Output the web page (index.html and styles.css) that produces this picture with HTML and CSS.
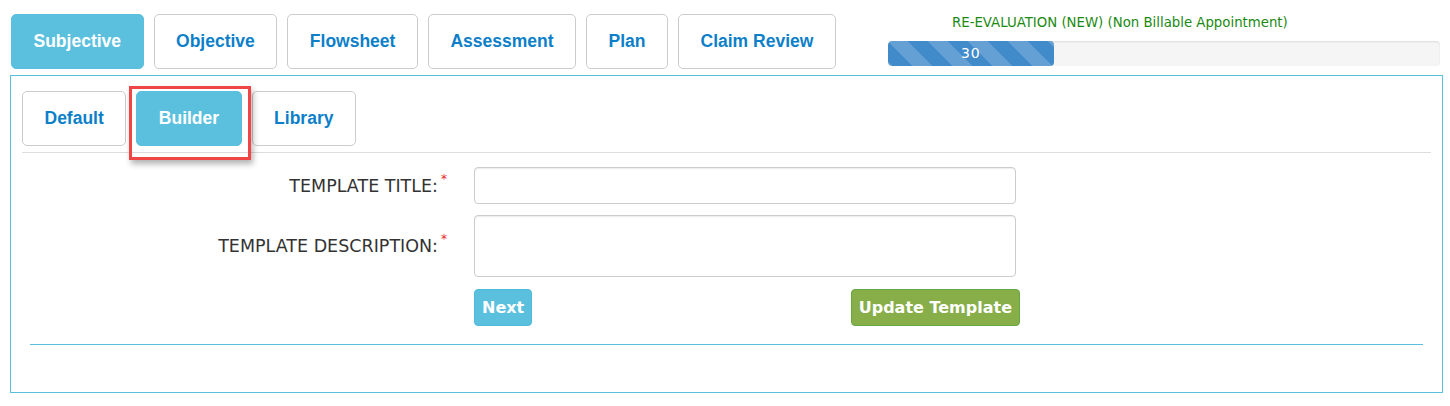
FILE: index.html
```html
<!DOCTYPE html>
<html lang="en">
<head>
<meta charset="utf-8">
<title>Template Builder</title>
<link rel="stylesheet" href="styles.css">
</head>
<body>
<div class="page">
  <header class="header">
    <nav class="tabs">
      <button class="tab active">Subjective</button>
      <button class="tab">Objective</button>
      <button class="tab">Flowsheet</button>
      <button class="tab">Assessment</button>
      <button class="tab">Plan</button>
      <button class="tab">Claim Review</button>
    </nav>
    <div class="status">
      <div class="status-label">RE-EVALUATION (NEW) (Non Billable Appointment)</div>
      <div class="progress"><div class="progress-bar" style="width:30%">30</div></div>
    </div>
  </header>
  <section class="panel">
    <nav class="tabs subtabs">
      <button class="tab">Default</button>
      <span class="mark-wrap"><button class="tab active">Builder</button><span class="mark"></span></span>
      <button class="tab">Library</button>
    </nav>
    <div class="divider"></div>
    <form class="form">
      <label class="label">TEMPLATE TITLE:<sup class="req">*</sup></label>
      <input class="field" type="text">
      <label class="label">TEMPLATE DESCRIPTION:<sup class="req">*</sup></label>
      <textarea class="field area"></textarea>
      <div class="spacer"></div>
      <div class="actions">
        <button type="button" class="btn btn-next">Next</button>
        <button type="button" class="btn btn-update">Update Template</button>
      </div>
    </form>
    <div class="rule"></div>
  </section>
</div>
</body>
</html>
```

FILE: styles.css
```css
* { box-sizing: border-box; }
html, body { margin: 0; padding: 0; background: #fff; }
body { font-family: "DejaVu Sans", sans-serif; }

.page { padding: 14px 7px 0 10px; }

.header { display: flex; align-items: flex-start; height: 55px; }

.tabs { display: flex; gap: 10px; margin-left: 1px; }

.tab {
  height: 55px;
  padding: 0 21.5px;
  border: 1px solid #ccc;
  border-radius: 5px;
  background: #fff;
  color: #0d7fc9;
  font-family: "Liberation Sans", Arial, sans-serif;
  font-weight: bold;
  font-size: 17.5px;
  cursor: pointer;
}
.tab.active { background: #5bc0de; border-color: #5bc0de; color: #fff; }

.status { margin-left: auto; margin-right: 3px; width: 552px; }
.status-label {
  padding-left: 64px;
  font-size: 13.3px;
  line-height: 18px;
  color: #1a8a12;
}
.progress {
  margin-top: 9px;
  height: 25px;
  background: #f5f5f5;
  border-radius: 4px;
  box-shadow: inset 0 1px 2px rgba(0,0,0,.1);
  overflow: hidden;
}
.progress-bar {
  height: 25px;
  line-height: 25px;
  text-align: center;
  color: #fff;
  font-size: 14px;
  letter-spacing: 1px;
  border-radius: 4px;
  background-color: #428bca;
  background-image: linear-gradient(45deg, rgba(255,255,255,.18) 25%, transparent 25%, transparent 50%, rgba(255,255,255,.18) 50%, rgba(255,255,255,.18) 75%, transparent 75%, transparent);
  background-size: 40px 40px;
}

.panel {
  margin-top: 6px;
  border: 1px solid #5bc0de;
  padding: 15px 11px 47px 11px;
}
.subtabs { margin-left: 0; }

.mark-wrap { position: relative; display: flex; }
.mark {
  position: absolute;
  left: -7px; right: -9px; top: -5px; bottom: -14px;
  border: 3px solid #f04545;
  box-shadow: 2px 4px 6px rgba(0,0,0,.3);
  pointer-events: none;
}

.divider { margin-top: 6px; height: 1px; background: #ddd; }

.form {
  margin-top: 14px;
  display: grid;
  grid-template-columns: 425px 546px;
  column-gap: 27px;
  row-gap: 11px;
  align-items: center;
}
.label {
  text-align: right;
  font-size: 17.5px;
  color: #333;
  white-space: nowrap;
}
.req {
  color: #e8262b;
  font-size: 12px;
  margin-left: 3px;
  vertical-align: 9px;
  line-height: 0;
}
.field {
  display: block;
  width: 542px;
  height: 37px;
  border: 1px solid #ccc;
  border-radius: 4px;
  box-shadow: inset 0 1px 1px rgba(0,0,0,.075);
  font-family: "DejaVu Sans", sans-serif;
  font-size: 14px;
  padding: 6px 12px;
  resize: none;
}
.area { height: 62px; }

.actions {
  margin-top: 1px;
  display: flex;
  justify-content: space-between;
}
.btn {
  height: 37px;
  padding: 0 7px;
  border: 1px solid;
  border-radius: 4px;
  color: #fff;
  font-family: "DejaVu Sans", sans-serif;
  font-weight: bold;
  font-size: 16px;
  cursor: pointer;
}
.btn-next { background: #5bc0de; border-color: #4fbbdb; }
.btn-update { background: #87ae49; border-color: #66a643; }

.rule { margin: 18px 8px 0 8px; height: 1px; background: #5bc0de; }
```
